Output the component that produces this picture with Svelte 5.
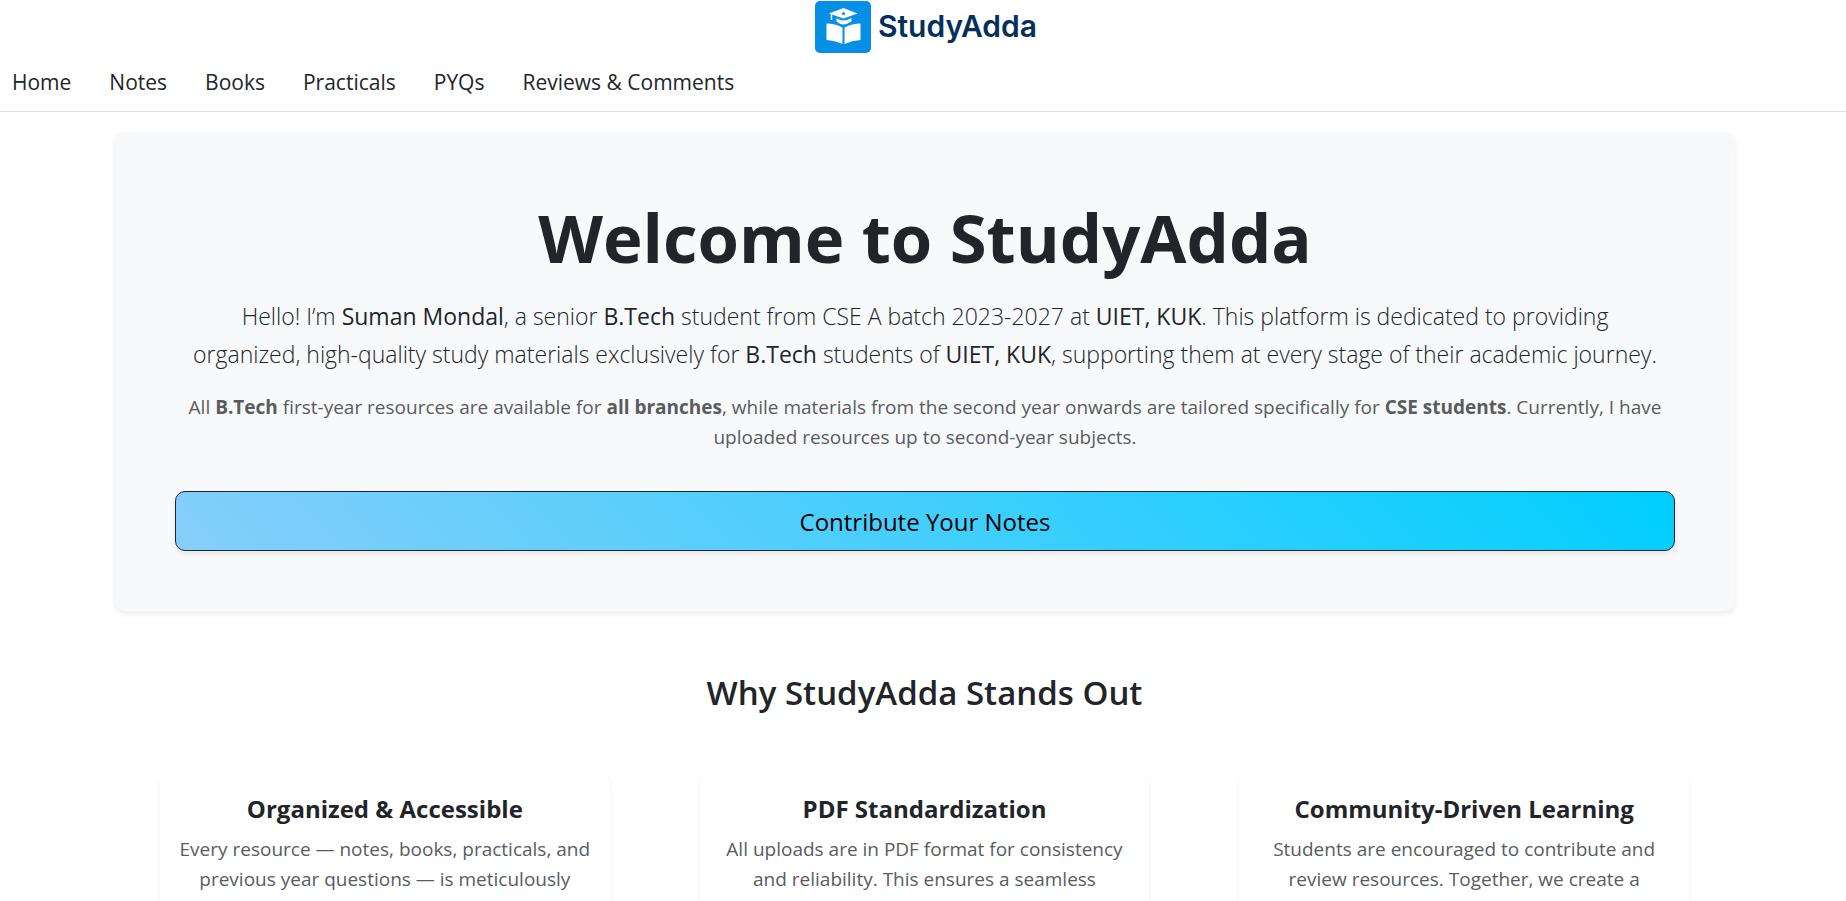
<script>
  const links = ['Home', 'Notes', 'Books', 'Practicals', 'PYQs', 'Reviews & Comments'];
  const features = [
    {
      title: 'Organized & Accessible',
      lines: ['Every resource — notes, books, practicals, and', 'previous year questions — is meticulously']
    },
    {
      title: 'PDF Standardization',
      lines: ['All uploads are in PDF format for consistency', 'and reliability. This ensures a seamless']
    },
    {
      title: 'Community-Driven Learning',
      lines: ['Students are encouraged to contribute and', 'review resources. Together, we create a']
    }
  ];
</script>

<div class="page">
  <header>
    <a class="brand" href="#home">
      <svg width="56" height="52" viewBox="0 0 56 52" aria-hidden="true">
        <rect width="56" height="52" rx="5" fill="#058fe5" />
        <path d="M14 12.500 28.500 7 42.500 12.500 28.500 17.500Z" fill="#fff" />
        <circle cx="28.500" cy="12.500" r="1.500" fill="#058fe5" />
        <path d="M16.500 13v6" stroke="#fff" stroke-width="1.400" />
        <path d="M21.500 16.500 28.500 19 36.500 16.500V20.500Q33 23 28.500 23.500 24 23 21.500 20.500Z" fill="#fff" />
        <path d="M20.500 16Q24 18.500 28.500 19 33 18.500 37.500 16" fill="none" stroke="#058fe5" stroke-width="1.200" />
        <path d="M11.500 22.500Q20 22.500 27.500 26.500V43Q20 39.500 11.500 39Z" fill="#fff" />
        <path d="M45.500 22.500Q37 22.500 29.500 26.500V43Q37 39.500 45.500 39Z" fill="#fff" />
      </svg>
      <span>StudyAdda</span>
    </a>
    <nav>
      {#each links as link}
        <a href="#{link.split(' ')[0].toLowerCase()}">{link}</a>
      {/each}
    </nav>
  </header>

  <main>
    <section class="hero">
      <h1>Welcome to StudyAdda</h1>
      <p class="lead">
        Hello! I’m <b>Suman Mondal</b>, a senior <b>B.Tech</b> student from CSE A batch 2023-2027 at <b>UIET, KUK</b>. This platform is dedicated to providing<br />
        organized, high-quality study materials exclusively for <b>B.Tech</b> students of <b>UIET, KUK</b>, supporting them at every stage of their academic journey.
      </p>
      <p class="note">
        All <b>B.Tech</b> first-year resources are available for <b>all branches</b>, while materials from the second year onwards are tailored specifically for <b>CSE students</b>. Currently, I have<br />
        uploaded resources up to second-year subjects.
      </p>
      <button type="button">Contribute Your Notes</button>
    </section>

    <section class="features">
      <h2>Why StudyAdda Stands Out</h2>
      <div class="cards">
        {#each features as feature}
          <article>
            <h3>{feature.title}</h3>
            <p>{feature.lines[0]}<br />{feature.lines[1]}</p>
          </article>
        {/each}
      </div>
    </section>
  </main>
</div>

<style>
  :global(body) {
    margin: 0;
    background: #fff;
  }
  .page {
    height: 100vh;
    overflow: hidden;
    color: #212529;
    font-family: 'Open Sans', 'Noto Sans', sans-serif;
    font-size: 19px;
    line-height: 30px;
  }
  h1, h2, h3, p {
    margin: 0;
  }
  a {
    color: inherit;
    text-decoration: none;
  }
  header {
    border-bottom: 1px solid #dee2e6;
    padding-bottom: 11px;
  }
  .brand {
    display: flex;
    justify-content: center;
    gap: 7px;
    padding: 1px 0 0 6px;
    font: 600 30px/50px Inter, sans-serif;
    color: #05305c;
  }
  nav {
    display: flex;
    gap: 38px;
    padding: 11px 12px 0;
    font-size: 21px;
    line-height: 36px;
  }
  main {
    padding: 20px 111px 0 115px;
  }
  .hero {
    padding: 60px;
    border-radius: 10px;
    background: #f8f9fb;
    box-shadow: 0 3px 6px rgba(0, 0, 0, 0.08);
    text-align: center;
  }
  h1 {
    font-size: 67px;
    font-weight: 700;
    line-height: 90px;
  }
  .lead {
    margin-top: 15px;
    font-size: 23px;
    font-weight: 300;
    line-height: 38px;
    white-space: nowrap;
  }
  .lead b {
    font-weight: 500;
  }
  .note {
    margin-top: 19px;
    color: #595c5f;
    white-space: nowrap;
  }
  button {
    width: 100%;
    margin-top: 39px;
    padding: 11px 10px 9px;
    border: 1px solid #212529;
    border-radius: 10px;
    background: linear-gradient(45deg, #87cefa, #00cfff);
    box-shadow: 0 3px 6px rgba(0, 0, 0, 0.08);
    color: #000;
    font: 400 24px/38px 'Open Sans', 'Noto Sans', sans-serif;
  }
  .features {
    padding: 60px 46px 0 45px;
    text-align: center;
  }
  h2 {
    font-size: 33px;
    font-weight: 600;
    line-height: 44px;
  }
  .cards {
    display: grid;
    grid-template-columns: repeat(3, 1fr);
    gap: 90px;
    margin-top: 58px;
  }
  article {
    padding: 19px 0 60px;
    border-radius: 10px;
    background: #fff;
    box-shadow: 0 3px 6px rgba(0, 0, 0, 0.06);
    white-space: nowrap;
  }
  h3 {
    font-size: 24px;
    font-weight: 700;
    line-height: 34px;
  }
  article p {
    margin-top: 8px;
    color: #595c5f;
  }
</style>
